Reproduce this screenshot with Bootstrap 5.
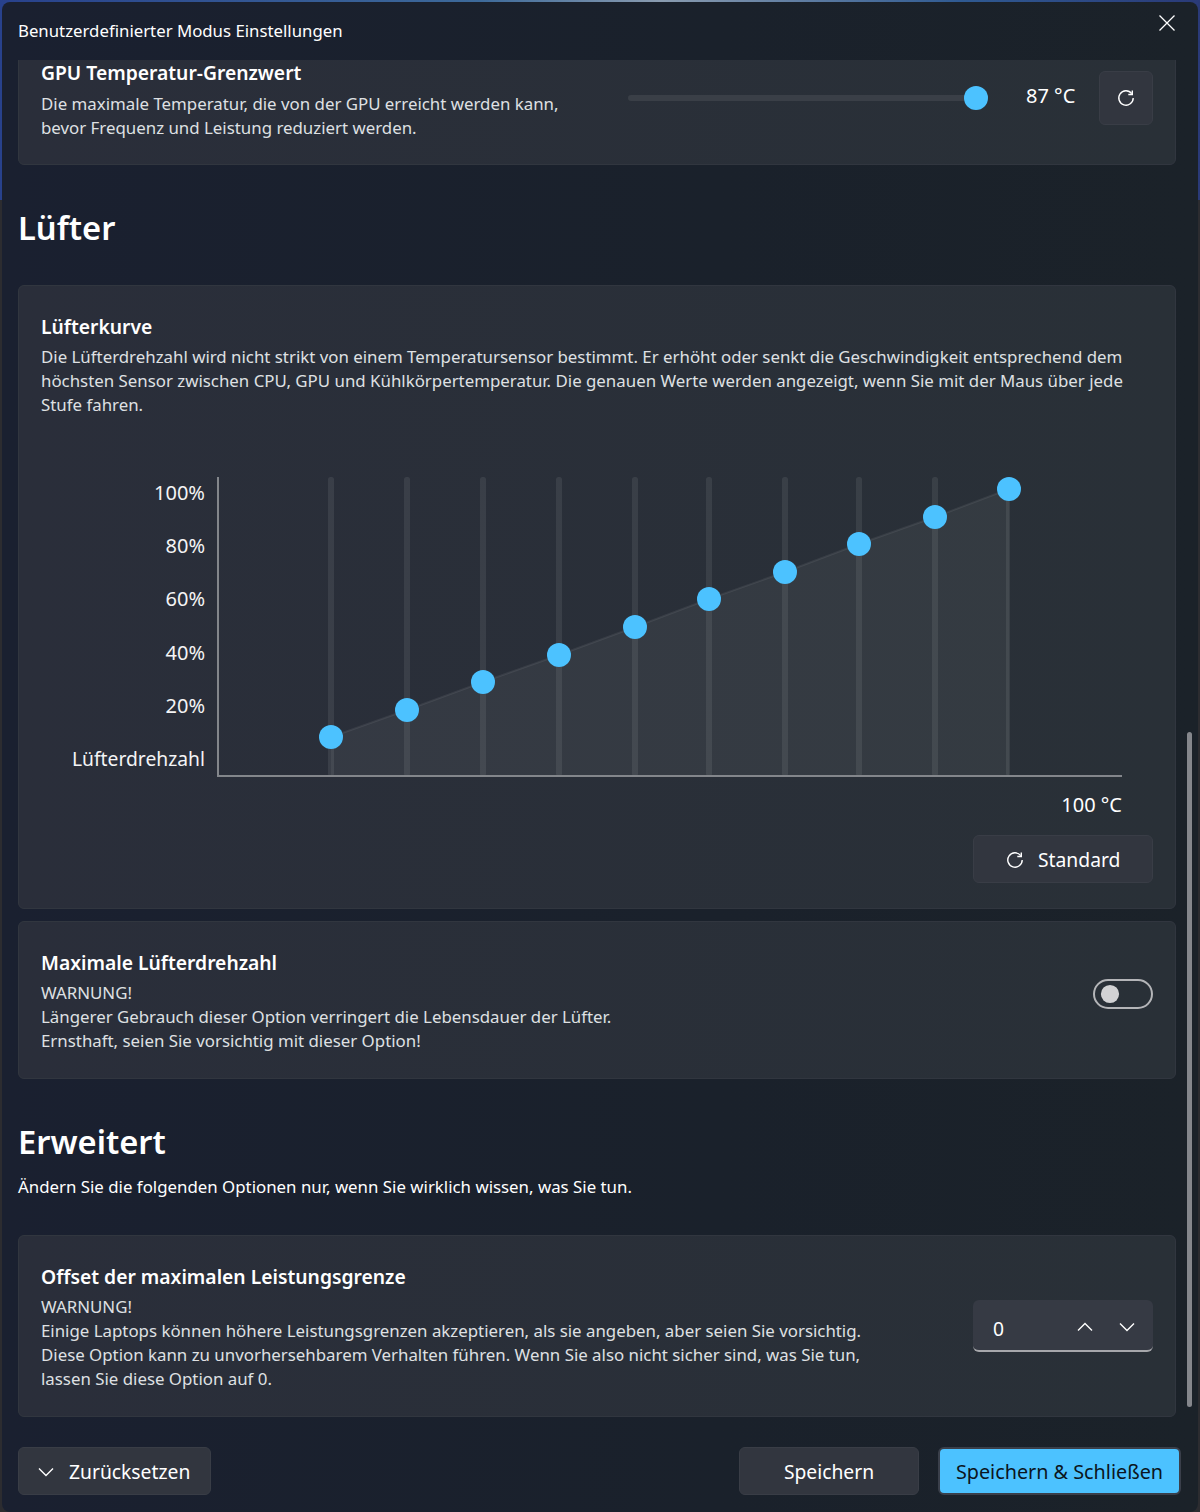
<!DOCTYPE html>
<html lang="de">
<head>
    <meta charset="UTF-8">
    <title>Benutzerdefinierter Modus Einstellungen</title>
    <link href="https://cdn.jsdelivr.net/npm/bootstrap@5.3.0/dist/css/bootstrap.min.css" rel="stylesheet">
    <style>
        html, body { height: 100%; }
        body {
            margin: 0; overflow: hidden; color: #fff;
            font-family: "Noto Sans", "Open Sans", sans-serif; font-size: 16.85px; line-height: 24px;
            background: linear-gradient(180deg, transparent 0, transparent 200px, #2c2c30 200px), linear-gradient(90deg, #28418c 0%, #3d6a9a 40%, #8a9cb0 55%, #2f5a92 80%, #2a3a78 100%);
        }
        .app-window {
            height: 1510px; margin: 2px 2px 0 2px;
            border-radius: 8px; overflow: hidden; position: relative;
            background: linear-gradient(90deg, #1a2030 0%, #1a212b 60%, #1b2229 100%);
        }
        .title-bar { height: 58px; padding: 17px 0 0 16px; font-size: 16.8px; }
        .close-x { position: absolute; top: 13px; right: 23px; }
        .scroll-pane { height: 1372px; overflow: hidden; padding: 0 22px 0 16px; }
        .setting-card {
            --bs-card-bg: #292e38; --bs-card-border-color: #31363f; --bs-card-border-radius: 6px;
            --bs-card-color: #fff; padding: 27px 22px 25px; margin-bottom: 12px;
            background-image: linear-gradient(90deg, #2a2e3a, #293037);
        }
        .first-card { margin-top: -29px; height: 134px; }
        .first-card .set-title { margin-bottom: 5px; }
        .set-title { font-size: 19.3px; font-weight: 600; line-height: 28px; margin-bottom: 4px; }
        .set-desc { color: #dfe0e3; }
        .sect-head { font-size: 32.7px; font-weight: 600; line-height: 44px; }
        .slider-wrap { width: 360px; height: 24px; }
        .value-text { font-size: 20px; width: 50px; white-space: nowrap; margin: -4px 23px 0 38px; }
        .fl-btn {
            --bs-btn-bg: #32363f; --bs-btn-border-color: #393d46; --bs-btn-color: #fff;
            --bs-btn-hover-bg: #3a3e47; --bs-btn-hover-color: #fff; --bs-btn-hover-border-color: #393d46;
            --bs-btn-border-radius: 6px; --bs-btn-font-size: 19.3px;
            height: 48px; padding-top: 8px; padding-bottom: 6px;
        }
        .reset-btn { width: 54px; height: 54px; padding: 0; }
        .lbl-col { width: 164px; height: 290px; margin: 5px 12px 0 0; font-size: 20px; color: #f4f4f5; white-space: nowrap; }
        .lbl-name { font-size: 19.3px; }
        .chart-end { width: 1081px; font-size: 20px; line-height: 28px; margin-top: 14px; }
        .std-btn { width: 180px; margin-top: 16px; padding-left: 32px; gap: 14px; }
        .chart-block { margin-top: 59px; }
        .fan-switch.form-check-input {
            width: 60px; height: 30px; margin: 0; float: none;
            background-color: transparent; border: 2px solid #b4b5b8;
            background-image: url("data:image/svg+xml,%3csvg xmlns='http://www.w3.org/2000/svg' viewBox='-4 -4 8 8'%3e%3ccircle r='2.8' fill='%23d2d2d4'/%3e%3c/svg%3e");
            background-position: 2px center;
        }
        .spin-box {
            width: 180px; height: 52px; background: #363a44; border-radius: 6px;
            border-bottom: 2px solid #a6a7ab; padding: 3px 18px 0 20px; font-size: 19.3px;
        }
        .spin-arrows { gap: 26px; }
        .bottom-bar { height: 80px; padding: 15px 17px 0 16px; }
        .btn-accent {
            --bs-btn-bg: #4cc2ff; --bs-btn-border-color: #3a3f4a; --bs-btn-color: #0b1520;
            --bs-btn-hover-bg: #4cc2ff; --bs-btn-hover-color: #0b1520; --bs-btn-hover-border-color: #3a3f4a;
            --bs-btn-border-radius: 6px; --bs-btn-font-size: 19.8px; --bs-btn-border-width: 2px;
            width: 243px; height: 48px; padding: 7px 0 5px; white-space: nowrap;
        }
        .save-btn { width: 180px; }
        .reset-all { width: 193px; padding-left: 19px; gap: 15px; }
        .end-btns { gap: 19px; }
        .scroll-thumb { position: absolute; left: 1185px; top: 730px; width: 5px; height: 675px; border-radius: 3px; background: #85878c; }
    </style>
</head>
<body>
    <div class="app-window">
        <div class="title-bar">Benutzerdefinierter Modus Einstellungen</div>
        <svg class="close-x" width="16" height="16" viewBox="0 0 16 16"><path d="M.5.5l15 15M15.5.5l-15 15" stroke="#fff" stroke-width="1.3" fill="none"/></svg>

        <div class="scroll-pane">
            <div class="card setting-card first-card">
                <div class="d-flex">
                    <div style="width: 587px">
                        <div class="set-title">GPU Temperatur-Grenzwert</div>
                        <div class="set-desc">Die maximale Temperatur, die von der GPU erreicht werden kann,<br>bevor Frequenz und Leistung reduziert werden.</div>
                    </div>
                    <div class="d-flex align-items-center" style="height: 78px">
                        <svg class="slider-wrap" viewBox="0 0 360 24"><rect x="0" y="9" width="350" height="6" rx="3" fill="#3a3f47"/><circle cx="348" cy="12" r="12" fill="#4cc2ff"/></svg>
                        <div class="value-text">87 °C</div>
                        <button class="btn fl-btn reset-btn d-flex align-items-center justify-content-center" type="button">
                            <svg width="18" height="18" viewBox="0 0 18 18" fill="none" stroke="#fff" stroke-width="1.4"><path d="M16.2 9A7.2 7.2 0 1 1 14.7 4.6"/><path d="M15.3 1.5v4h-4"/></svg>
                        </button>
                    </div>
                </div>
            </div>

            <div class="sect-head" style="margin-top: 41px; margin-bottom: 35px">Lüfter</div>

            <div class="card setting-card">
                <div class="set-title">Lüfterkurve</div>
                <div class="set-desc">Die Lüfterdrehzahl wird nicht strikt von einem Temperatursensor bestimmt. Er erhöht oder senkt die Geschwindigkeit entsprechend dem höchsten Sensor zwischen CPU, GPU und Kühlkörpertemperatur. Die genauen Werte werden angezeigt, wenn Sie mit der Maus über jede Stufe fahren.</div>
                <div class="chart-block d-flex">
                    <div class="lbl-col d-flex flex-column justify-content-between text-end">
                        <div>100%</div><div>80%</div><div>60%</div><div>40%</div><div>20%</div><div class="lbl-name">Lüfterdrehzahl</div>
                    </div>
                    <svg id="fanCurve" width="905" height="301" viewBox="217 476 905 301"></svg>
                </div>
                <div class="chart-end text-end">100 °C</div>
                <div class="d-flex justify-content-end">
                    <button class="btn fl-btn std-btn d-flex align-items-center" type="button">
                        <svg width="18" height="18" viewBox="0 0 18 18" fill="none" stroke="#fff" stroke-width="1.4"><path d="M16.2 9A7.2 7.2 0 1 1 14.7 4.6"/><path d="M15.3 1.5v4h-4"/></svg>
                        Standard
                    </button>
                </div>
            </div>

            <div class="card setting-card d-flex flex-row justify-content-between">
                <div>
                    <div class="set-title">Maximale Lüfterdrehzahl</div>
                    <div class="set-desc">WARNUNG!<br>Längerer Gebrauch dieser Option verringert die Lebensdauer der Lüfter.<br>Ernsthaft, seien Sie vorsichtig mit dieser Option!</div>
                </div>
                <div class="form-check form-switch p-0 m-0" style="margin-top: 30px !important">
                    <input class="form-check-input fan-switch" type="checkbox" role="switch">
                </div>
            </div>

            <div class="sect-head" style="margin-top: 41px">Erweitert</div>
            <div style="margin-top: 11px; margin-bottom: 36px">Ändern Sie die folgenden Optionen nur, wenn Sie wirklich wissen, was Sie tun.</div>

            <div class="card setting-card d-flex flex-row justify-content-between">
                <div>
                    <div class="set-title">Offset der maximalen Leistungsgrenze</div>
                    <div class="set-desc">WARNUNG!<br>Einige Laptops können höhere Leistungsgrenzen akzeptieren, als sie angeben, aber seien Sie vorsichtig.<br>Diese Option kann zu unvorhersehbarem Verhalten führen. Wenn Sie also nicht sicher sind, was Sie tun,<br>lassen Sie diese Option auf 0.</div>
                </div>
                <div class="spin-box d-flex align-items-center justify-content-between" style="margin-top: 37px">
                    <span style="margin-top: 5px">0</span>
                    <span class="spin-arrows d-flex align-items-center">
                        <svg width="16" height="10" viewBox="0 0 16 10" fill="none" stroke="#fff" stroke-width="1.4"><path d="M1 8.5l7-7 7 7"/></svg>
                        <svg width="16" height="10" viewBox="0 0 16 10" fill="none" stroke="#fff" stroke-width="1.4"><path d="M1 1.5l7 7 7-7"/></svg>
                    </span>
                </div>
            </div>
        </div>

        <div class="bottom-bar d-flex justify-content-between">
            <button class="btn fl-btn reset-all d-flex align-items-center" type="button">
                <svg width="16" height="10" viewBox="0 0 16 10" fill="none" stroke="#fff" stroke-width="1.4"><path d="M1 1.5l7 7 7-7"/></svg>
                Zurücksetzen
            </button>
            <div class="end-btns d-flex">
                <button class="btn fl-btn save-btn" type="button">Speichern</button>
                <button class="btn btn-accent" type="button">Speichern &amp; Schließen</button>
            </div>
        </div>
        <div class="scroll-thumb"></div>
    </div>
    <script src="https://cdn.jsdelivr.net/npm/bootstrap@5.3.0/dist/js/bootstrap.bundle.min.js"></script>
    <script>
        // fan curve points, page coords
        const xs = [331, 407, 483, 559, 635, 709, 785, 859, 935, 1009];
        const ys = [737, 710, 682, 655, 627, 599, 572, 544, 517, 489];
        let s = '';
        const pts = xs.map((x, i) => x + ',' + ys[i]).join(' ');
        s += '<polygon points="331,776 ' + pts + ' 1009,776" fill="rgba(255,255,255,.055)"/>';
        s += '<polyline points="' + pts + '" fill="none" stroke="rgba(255,255,255,.07)" stroke-width="2"/>';
        xs.forEach((x, i) => {
            const w = i === 9 ? 4 : 6;
            const left = i === 9 ? 1006 : x - 3;
            s += '<rect x="' + left + '" y="477" width="' + w + '" height="299" rx="2.5" fill="rgba(255,255,255,.08)"/>';
        });
        s += '<path d="M218 477V776H1122" fill="none" stroke="#83868b" stroke-width="2"/>';
        xs.forEach((x, i) => { s += '<circle cx="' + x + '" cy="' + ys[i] + '" r="12" fill="#4cc2ff"/>'; });
        document.getElementById('fanCurve').innerHTML = s;
    </script>
</body>
</html>
